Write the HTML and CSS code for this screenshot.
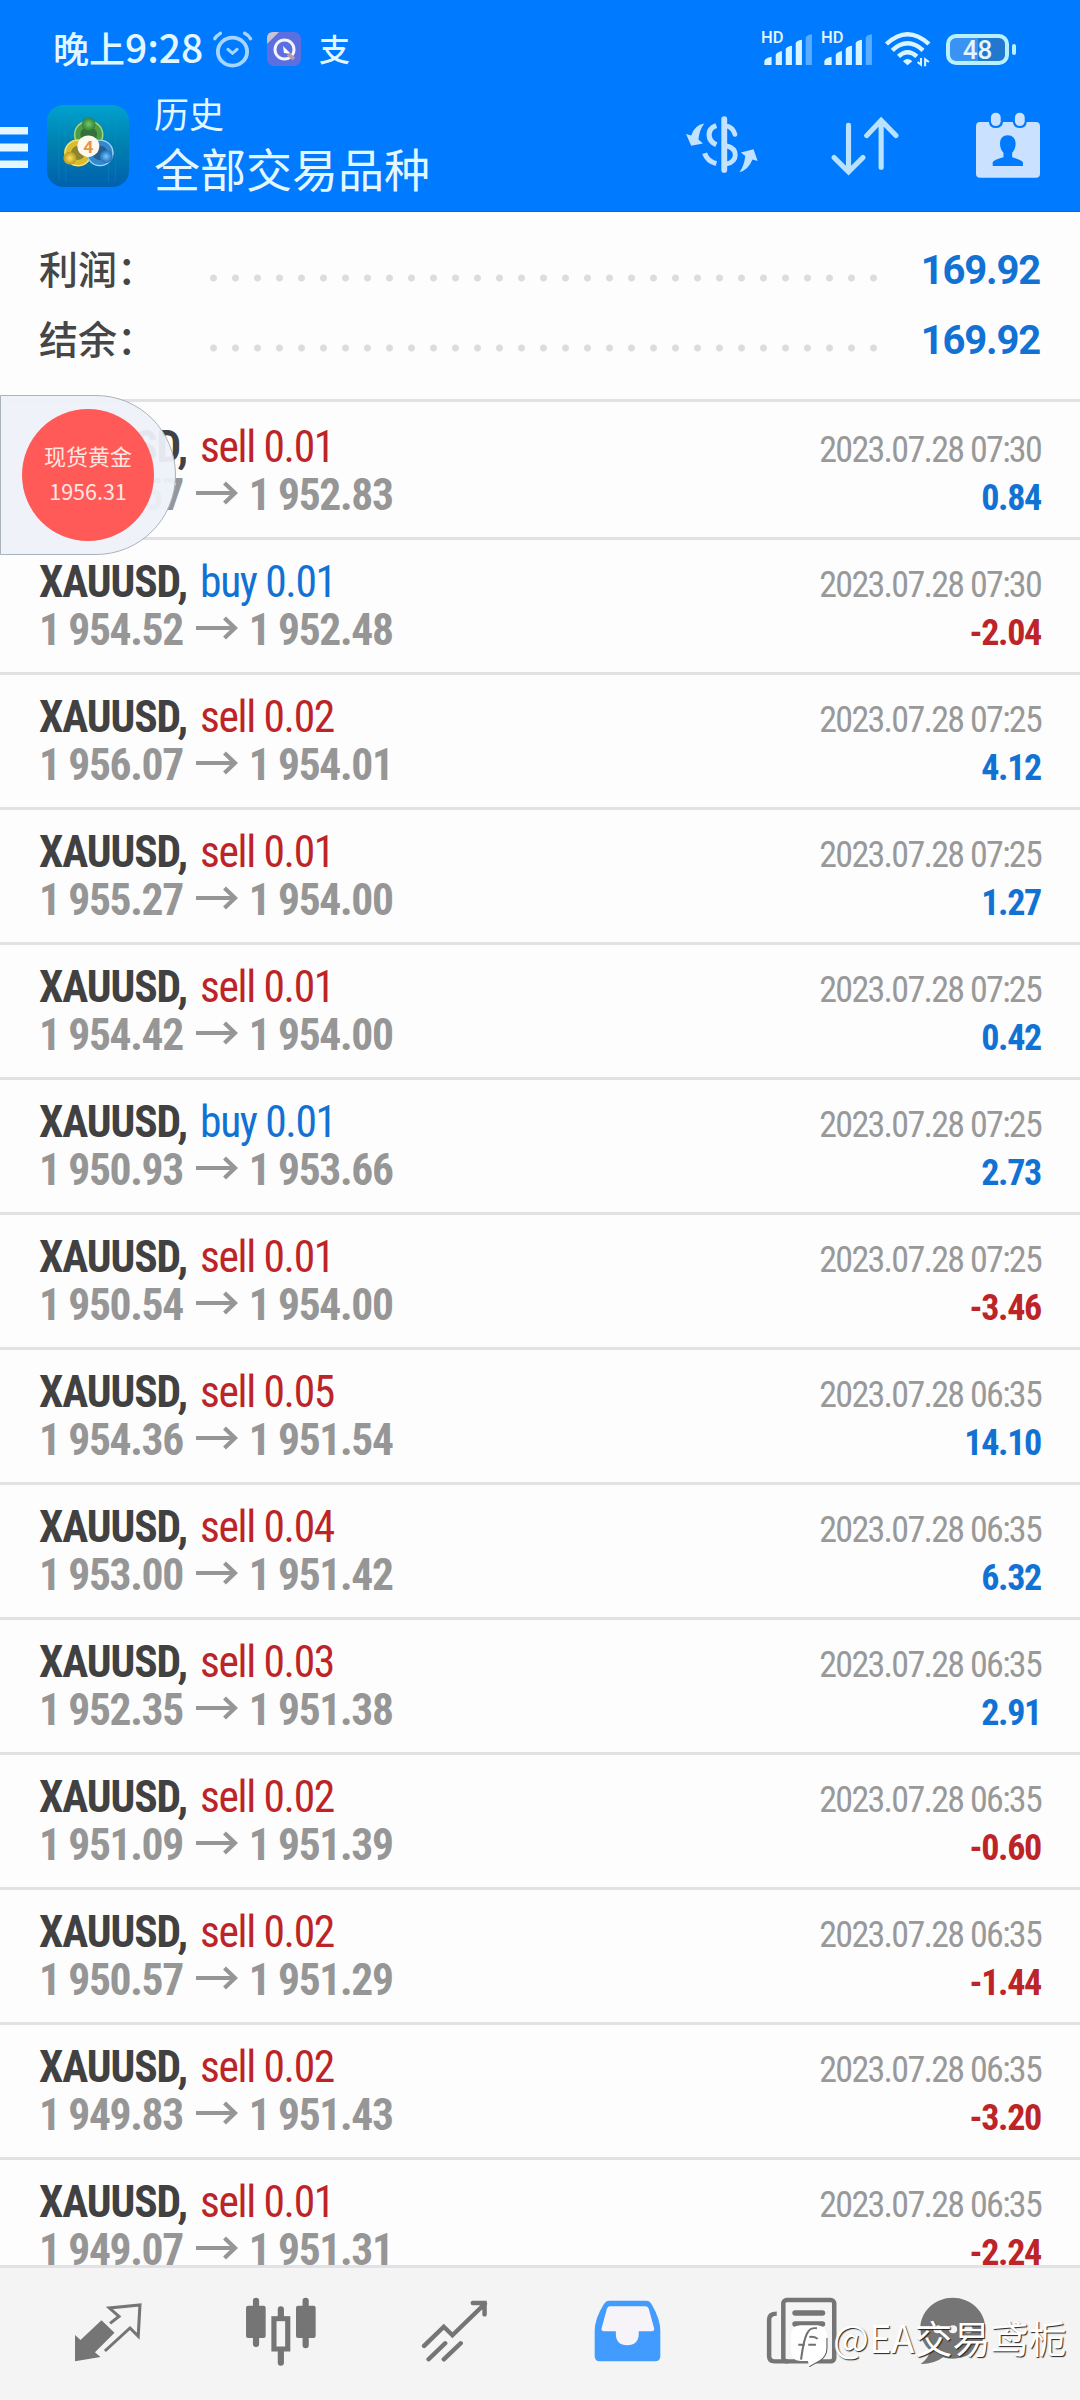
FILE: index.html
```html
<!DOCTYPE html>
<html lang="zh-CN">
<head>
<meta charset="utf-8">
<title>历史 - 全部交易品种</title>
<link rel="stylesheet" href="styles.css">
</head>
<body>
<svg width="0" height="0" class="defs">
  <symbol id="arrow" viewBox="0 0 42 24"><path d="M0 12H38M28.5 2L39 12L28.5 22" fill="none" stroke="currentColor" stroke-width="4.2"/></symbol>
  <symbol id="bars" viewBox="650 95 145 102" preserveAspectRatio="none">
    <path d="M651 194V183q2-11 21-14V194ZM684 194V164q2-8 18-12V194ZM713 194V146q2-7 18-10V194ZM742 194V128q2-7 18-10V194Z" fill="#d8f5ff"/>
    <path d="M771 194V112q2-7 18-10V194Z" fill="#58adff"/>
  </symbol>
</svg>
<div class="screen">
  <header class="header">
    <div class="status">
      <div class="clock">晚上<span class="digits">9:28</span></div>
      <svg class="alarm" preserveAspectRatio="none" viewBox="616 88 118 114" fill="none" stroke="#a5d6ff" stroke-linecap="round">
        <circle cx="675" cy="153" r="42" stroke-width="11"/><path d="M624 114Q630 104 640 98M710 98Q722 104 727 114" stroke-width="10"/><path d="M662 146L675 158L688 146" stroke-width="9"/>
      </svg>
      <svg class="app-q" viewBox="0 0 34 34">
        <rect width="34" height="34" rx="7" fill="#5b6fe0"/><path d="M0 12L12 0H6Q0 0 0 6Z" fill="#c9c4d4"/>
        <circle cx="17.5" cy="17.5" r="9.5" fill="none" stroke="#f2f4ff" stroke-width="3"/><path d="M16 14L24 22L17 21Z" fill="#fff"/><path d="M21 22L27 27" stroke="#b99aa8" stroke-width="4"/>
      </svg>
      <span class="pay">支</span>
      <div class="signal"><span class="hd">HD</span><svg class="bars"><use href="#bars"/></svg></div>
      <div class="signal second"><span class="hd">HD</span><svg class="bars"><use href="#bars"/></svg></div>
      <svg class="wifi" preserveAspectRatio="none" viewBox="1000 95 136 108" fill="none" stroke="#d8f5ff" stroke-width="13">
        <path d="M1007 134Q1068 75 1130 134M1024 153Q1068 111 1113 153M1042 171Q1068 146 1095 171"/>
        <path d="M1068 198L1055 186Q1068 172 1082 186Z" fill="#d8f5ff" stroke="none"/>
        <path d="M1107 176V196L1097 188M1119 201V180L1130 188" stroke-width="6"/>
      </svg>
      <div class="battery"><span>48</span></div>
    </div>
    <div class="nav">
      <svg class="menu" viewBox="0 0 28 41" fill="#e4f6ff"><path d="M0 0H28V7.500H0ZM0 16.500H28V24.500H0ZM0 33.500H28V41H0Z"/></svg>
      <svg class="logo" preserveAspectRatio="none" viewBox="135 315 240 245">
        <defs>
          <linearGradient id="tile" x2="0" y2="1"><stop stop-color="#00a2cf"/><stop offset=".5" stop-color="#007fae"/><stop offset="1" stop-color="#0060ae"/></linearGradient>
          <radialGradient id="green"><stop stop-color="#7cc46a"/><stop offset="1" stop-color="#2f8238"/></radialGradient>
          <radialGradient id="gold"><stop stop-color="#ffe066"/><stop offset="1" stop-color="#b99a1e"/></radialGradient>
          <radialGradient id="blue"><stop stop-color="#74c8ff"/><stop offset="1" stop-color="#1f6eb4"/></radialGradient>
        </defs>
        <rect x="135" y="315" width="240" height="245" rx="48" fill="url(#tile)"/>
        <path d="M170 335V545M190 335V545M315 335V545M335 335V545" stroke="#1b9cc4" stroke-width="2" opacity=".4"/>
        <circle cx="257" cy="404" r="34" fill="#35703c" stroke="#4c9d45" stroke-width="19"/>
        <circle cx="257" cy="404" r="41" fill="none" stroke="#a3d890" stroke-width="4"/>
        <circle cx="226" cy="458" r="31" fill="#8c8630" stroke="#d9bd2e" stroke-width="20"/>
        <circle cx="226" cy="458" r="38" fill="none" stroke="#f6e47c" stroke-width="4"/>
        <circle cx="290" cy="458" r="31" fill="#255f94" stroke="#3488cc" stroke-width="18"/>
        <circle cx="290" cy="458" r="38" fill="none" stroke="#a0d5fa" stroke-width="4"/>
        <circle cx="257" cy="372" r="20" fill="url(#green)"/><circle cx="202" cy="474" r="19" fill="url(#gold)"/><circle cx="308" cy="469" r="19" fill="url(#blue)"/>
        <circle cx="256" cy="438" r="32" fill="#fff8ee"/><text x="256" y="457" class="four">4</text>
      </svg>
      <div class="titles"><div class="title">历史</div><div class="subtitle">全部交易品种</div></div>
      <svg class="currency" preserveAspectRatio="none" viewBox="422 348 212 170" fill="none" stroke="#c2e2ff">
        <path d="M536 357V509" stroke-width="17" stroke-linecap="round"/>
        <path d="M513 377Q492 384 492 404Q492 424 513 434M479 459Q487 483 513 490" stroke-width="15"/>
        <path d="M540 377Q561 380 567 403M542 437Q568 443 568 464Q568 485 542 491" stroke-width="14" stroke-linecap="round"/>
        <path d="M478 370Q450 374 440 406L425 402L440 437L474 430L461 418Q464 388 478 370ZM580 516Q606 509 618 478L633 482L621 447L584 457L597 467Q594 496 580 516Z" fill="#c2e2ff" stroke="none"/>
      </svg>
      <svg class="sort" preserveAspectRatio="none" viewBox="845 348 198 178" fill="none" stroke="#b9e2ff" stroke-width="15" stroke-linecap="round"><path d="M896 373V511M854 470L896 514L938 470M991 500V362M949 404L991 358L1034 404"/></svg>
      <svg class="calendar" preserveAspectRatio="none" viewBox="1267 336 184 198" fill="#cae2ff">
        <path d="M1279 366H1304Q1306 384 1324 384T1345 366H1373Q1375 384 1393 384T1413 366H1439Q1451 366 1451 378V521Q1451 533 1439 533H1279Q1267 533 1267 521V378Q1267 366 1279 366Z"/>
        <rect x="1310" y="338" width="28" height="40" rx="14"/><rect x="1379" y="338" width="28" height="40" rx="14"/>
        <path d="M1315 498V487Q1318 480 1346 472V458Q1336 448 1336 430Q1337 406 1358 406T1381 430Q1381 448 1371 458V472Q1399 480 1402 487V498Z" fill="#007aff"/>
      </svg>
    </div>
  </header>
  <section class="summary">
    <div class="sum"><span class="label">利润：</span><i class="dots"></i><b class="total">169.92</b></div>
    <div class="sum"><span class="label">结余：</span><i class="dots"></i><b class="total">169.92</b></div>
  </section>
  <main class="deals">
    <article class="deal"><div class="line"><b>XAUUSD,</b><span class="side sell">sell 0.01</span><time>2023.07.28 07:30</time></div><div class="line price"><b>1 954.57</b><svg><use href="#arrow"/></svg><b>1 952.83</b><b class="amount up">0.84</b></div></article>
    <article class="deal"><div class="line"><b>XAUUSD,</b><span class="side buy">buy 0.01</span><time>2023.07.28 07:30</time></div><div class="line price"><b>1 954.52</b><svg><use href="#arrow"/></svg><b>1 952.48</b><b class="amount down">-2.04</b></div></article>
    <article class="deal"><div class="line"><b>XAUUSD,</b><span class="side sell">sell 0.02</span><time>2023.07.28 07:25</time></div><div class="line price"><b>1 956.07</b><svg><use href="#arrow"/></svg><b>1 954.01</b><b class="amount up">4.12</b></div></article>
    <article class="deal"><div class="line"><b>XAUUSD,</b><span class="side sell">sell 0.01</span><time>2023.07.28 07:25</time></div><div class="line price"><b>1 955.27</b><svg><use href="#arrow"/></svg><b>1 954.00</b><b class="amount up">1.27</b></div></article>
    <article class="deal"><div class="line"><b>XAUUSD,</b><span class="side sell">sell 0.01</span><time>2023.07.28 07:25</time></div><div class="line price"><b>1 954.42</b><svg><use href="#arrow"/></svg><b>1 954.00</b><b class="amount up">0.42</b></div></article>
    <article class="deal"><div class="line"><b>XAUUSD,</b><span class="side buy">buy 0.01</span><time>2023.07.28 07:25</time></div><div class="line price"><b>1 950.93</b><svg><use href="#arrow"/></svg><b>1 953.66</b><b class="amount up">2.73</b></div></article>
    <article class="deal"><div class="line"><b>XAUUSD,</b><span class="side sell">sell 0.01</span><time>2023.07.28 07:25</time></div><div class="line price"><b>1 950.54</b><svg><use href="#arrow"/></svg><b>1 954.00</b><b class="amount down">-3.46</b></div></article>
    <article class="deal"><div class="line"><b>XAUUSD,</b><span class="side sell">sell 0.05</span><time>2023.07.28 06:35</time></div><div class="line price"><b>1 954.36</b><svg><use href="#arrow"/></svg><b>1 951.54</b><b class="amount up">14.10</b></div></article>
    <article class="deal"><div class="line"><b>XAUUSD,</b><span class="side sell">sell 0.04</span><time>2023.07.28 06:35</time></div><div class="line price"><b>1 953.00</b><svg><use href="#arrow"/></svg><b>1 951.42</b><b class="amount up">6.32</b></div></article>
    <article class="deal"><div class="line"><b>XAUUSD,</b><span class="side sell">sell 0.03</span><time>2023.07.28 06:35</time></div><div class="line price"><b>1 952.35</b><svg><use href="#arrow"/></svg><b>1 951.38</b><b class="amount up">2.91</b></div></article>
    <article class="deal"><div class="line"><b>XAUUSD,</b><span class="side sell">sell 0.02</span><time>2023.07.28 06:35</time></div><div class="line price"><b>1 951.09</b><svg><use href="#arrow"/></svg><b>1 951.39</b><b class="amount down">-0.60</b></div></article>
    <article class="deal"><div class="line"><b>XAUUSD,</b><span class="side sell">sell 0.02</span><time>2023.07.28 06:35</time></div><div class="line price"><b>1 950.57</b><svg><use href="#arrow"/></svg><b>1 951.29</b><b class="amount down">-1.44</b></div></article>
    <article class="deal"><div class="line"><b>XAUUSD,</b><span class="side sell">sell 0.02</span><time>2023.07.28 06:35</time></div><div class="line price"><b>1 949.83</b><svg><use href="#arrow"/></svg><b>1 951.43</b><b class="amount down">-3.20</b></div></article>
    <article class="deal"><div class="line"><b>XAUUSD,</b><span class="side sell">sell 0.01</span><time>2023.07.28 06:35</time></div><div class="line price"><b>1 949.07</b><svg><use href="#arrow"/></svg><b>1 951.31</b><b class="amount down">-2.24</b></div></article>
  </main>
  <nav class="tabs">
    <svg class="quotes" preserveAspectRatio="none" viewBox="216 548 198 177"><path d="M219 723V644L235 659L296 600L334 637L277 696L293 710Z" fill="#757575"/><path d="M321 609L347 588L319 563L408 554L403 648L379 623L306 692" fill="none" stroke="#757575" stroke-width="9"/></svg>
    <svg class="candles" preserveAspectRatio="none" viewBox="712 532 206 207"><g fill="#757575"><rect x="715" y="558" width="57" height="97" rx="6"/><rect x="860" y="558" width="57" height="97" rx="6"/></g><g stroke="#757575" stroke-width="18" stroke-linecap="round" fill="none"><path d="M744 543V673M888 543V677M816 569V595M816 697V729"/></g><rect x="796" y="597" width="40" height="91" fill="#f4f4f4" stroke="#757575" stroke-width="15"/></svg>
    <svg class="trend" preserveAspectRatio="none" viewBox="1222 540 194 185" fill="none" stroke="#757575" stroke-width="13" stroke-linecap="round"><path d="M1231 677L1288 620L1313 645L1407 551M1372 549H1406V583M1244 717L1292 669M1288 717L1337 669"/></svg>
    <svg class="inbox" preserveAspectRatio="none" viewBox="156 540 196 185"><path d="M201 542H309Q319 542 324 552Q350 596 350 632V708Q350 723 335 723H173Q158 723 158 708V632Q158 596 185 552Q191 542 201 542Z" fill="#429cff"/><path d="M203 559H306Q313 559 316 565L332 625Q333 633 325 633H287V643Q285 675 253 675T220 643V633H185Q177 633 178 625L194 565Q197 559 203 559Z" fill="#f6f4f8"/></svg>
    <svg class="news" preserveAspectRatio="none" viewBox="655 532 205 201" fill="none" stroke="#757575" stroke-width="13"><rect x="705" y="541" width="147" height="184" rx="10"/><path d="M686 582Q664 582 664 600V710Q664 725 680 725H720"/><path d="M739 580H818M739 613H818" stroke-width="16" stroke-linecap="round"/></svg>
    <svg class="chat" preserveAspectRatio="none" viewBox="1102 532 192 203"><path d="M1197 534C1250 534 1292 575 1292 625S1250 716 1197 716Q1180 716 1169 712Q1142 733 1104 732Q1128 714 1131 692Q1103 665 1103 625C1103 575 1145 534 1197 534Z" fill="#757575"/><g fill="#f4f4f4"><circle cx="1153" cy="628" r="12"/><circle cx="1198" cy="628" r="12"/><circle cx="1243" cy="628" r="12"/></g></svg>
  </nav>
  <aside class="float"><div class="bubble"><span>现货黄金</span><span class="quote">1956.31</span></div></aside>
  <div class="watermark">
    <svg preserveAspectRatio="none" viewBox="728 598 110 130"><path d="M758 602H808Q834 604 835 635V670Q835 695 816 708L784 727L780 710H758Q731 708 731 682V632Q731 604 758 602Z" fill="#fff"/><path d="M784 727L816 708Q835 695 835 670V640" fill="none" stroke="#555" stroke-width="3"/><path d="M760 706Q768 640 780 622Q788 608 806 611M752 661H771M781 661H803M784 637Q800 634 808 643" fill="none" stroke="#707070" stroke-width="6"/></svg>
    <span>@EA交易鸢栀</span>
  </div>
</div>
</body>
</html>
```
FILE: styles.css
```css
* { box-sizing: border-box; }
body { margin: 0; background: #fdfdfd; font-family: "Noto Sans CJK SC", sans-serif; }
svg { display: block; flex: none; }
.defs { position: absolute; }
.screen { position: relative; width: 1080px; height: 2400px; overflow: hidden; display: flex; flex-direction: column; }

.header { height: 212px; flex: none; background: #007aff; border-bottom: 1px solid #1c66b8; color: #e2f7ff; }
.status { height: 98px; display: flex; align-items: center; padding-left: 53px; }
.clock { width: 159px; margin-top: -5px; font-size: 36px; font-weight: 500; line-height: 48px; white-space: nowrap; }
.digits { font-size: 39px; }
.alarm { width: 41px; height: 38px; }
.app-q { width: 34px; height: 34px; margin-left: 14px; }
.pay { width: 34px; margin: -3px 0 0 18px; font-size: 31px; line-height: 36px; font-weight: 500; }
.signal { position: relative; width: 50px; height: 34px; margin-left: 409px; padding: 0 0 0 2px; }
.second { margin-left: 10px; }
.hd { position: absolute; left: -1px; top: -3px; font: 500 16.500px/18px Roboto, sans-serif; }
.bars { width: 50px; height: 34px; }
.wifi { width: 47px; height: 36px; margin-left: 12px; }
.battery { position: relative; width: 63px; height: 31px; margin-left: 15px; border: 4px solid #b9f0ff; border-radius: 10px; background: linear-gradient(90deg, #3a93f2 0 28px, #2277cf 28px); font: 500 26px/24px Roboto, sans-serif; text-align: center; }
.battery::after { content: ""; position: absolute; right: -11px; top: 6px; width: 4px; height: 11px; border-radius: 2px; background: #b9f0ff; }
.nav { height: 96px; display: flex; align-items: center; }
.menu { width: 28px; height: 41px; margin-top: 3px; }
.logo { width: 82px; height: 82px; margin-left: 19px; }
.four { font: 700 52px Roboto, sans-serif; fill: #e8954a; text-anchor: middle; }
.titles { width: 531px; margin: -4px 0 0 25px; }
.title { font-size: 35px; line-height: 46px; }
.subtitle { font-size: 46px; line-height: 62px; }
.currency { width: 73px; height: 57px; margin-top: -3px; }
.sort { width: 68px; height: 59px; margin-left: 73px; }
.calendar { width: 64px; height: 66px; margin: -2px 0 0 77px; }

.summary { height: 190px; flex: none; padding-top: 20px; border-bottom: 3px solid #e2e2e2; }
.sum { height: 70px; display: flex; align-items: center; padding: 0 40px 0 39px; }
.label { width: 171px; font-size: 39px; line-height: 50px; font-weight: 500; color: #464646; }
.dots { width: 682px; height: 8px; margin-top: 22px; background: radial-gradient(circle at 3.500px 4px, #dcdcdc 3px, transparent 4px) 0 0 / 22px 8px repeat-x; }
.total { margin: 8px 0 0 auto; font: 700 40px/50px Roboto, sans-serif; letter-spacing: -1.200px; color: #1272d4; }

.deals { height: 1863px; flex: none; padding-top: 3px; overflow: hidden; }
.deal { height: 135px; padding: 16px 38px 0 39px; border-bottom: 3px solid #e2e2e2; }
.line { display: flex; align-items: baseline; height: 48px; white-space: nowrap; font: 400 43.500px/54px "Roboto Condensed", Roboto, sans-serif; letter-spacing: -1.350px; color: #414141; }
.line b:first-child { letter-spacing: -1.100px; }
.price { color: #969696; }
.price b:first-child { letter-spacing: -1.350px; }
.side { margin-left: 13px; }
.sell { color: #bd2428; }
.buy { color: #1272d4; }
time { margin: 0 1px 0 auto; font-size: 36px; letter-spacing: -1.700px; color: #999; }
.price svg { width: 42px; height: 24px; margin: 0 11px 0 13px; position: relative; top: -5px; }
.price .amount { margin: 0 1px 0 auto; font-size: 36px; letter-spacing: -1.300px; }
.up { color: #1272d4; }
.down { color: #bd2428; }

.tabs { height: 135px; flex: none; display: flex; align-items: flex-start; padding: 32px 0 0 74px; background: #f4f4f4; border-top: 3px solid #e2e2e6; }
.quotes { width: 68px; height: 59px; margin-top: 3px; }
.candles { width: 71px; height: 69px; margin: -3px 0 0 103px; }
.trend { width: 67px; height: 62px; margin-left: 105px; }
.inbox { width: 67px; height: 62px; margin-left: 106px; }
.news { width: 71px; height: 67px; margin: -3px 0 0 105px; }
.chat { width: 66px; height: 68px; margin: -3px 0 0 83px; }

.float { position: absolute; left: 0; top: 395px; width: 176px; height: 160px; padding: 13px 0 0 22px; border: 1px solid #a9b3bc; border-radius: 0 80px 80px 0; background: rgba(238, 242, 249, .94); }
.bubble { width: 132px; height: 132px; margin-left: -1px; border-radius: 50%; background: #ff5a57; color: #ffe6e2; display: flex; flex-direction: column; align-items: center; padding-top: 28px; font-size: 22px; line-height: 36px; }
.quote { font-size: 21.500px; }
.watermark { position: absolute; left: 790px; top: 2307px; display: flex; align-items: center; color: #fff; font-size: 38px; line-height: 50px; white-space: nowrap; text-shadow: 1px 1px 1px #222; }
.watermark svg { width: 38px; height: 43px; margin-top: 17px; }
.watermark span { margin-left: 5px; }
```
